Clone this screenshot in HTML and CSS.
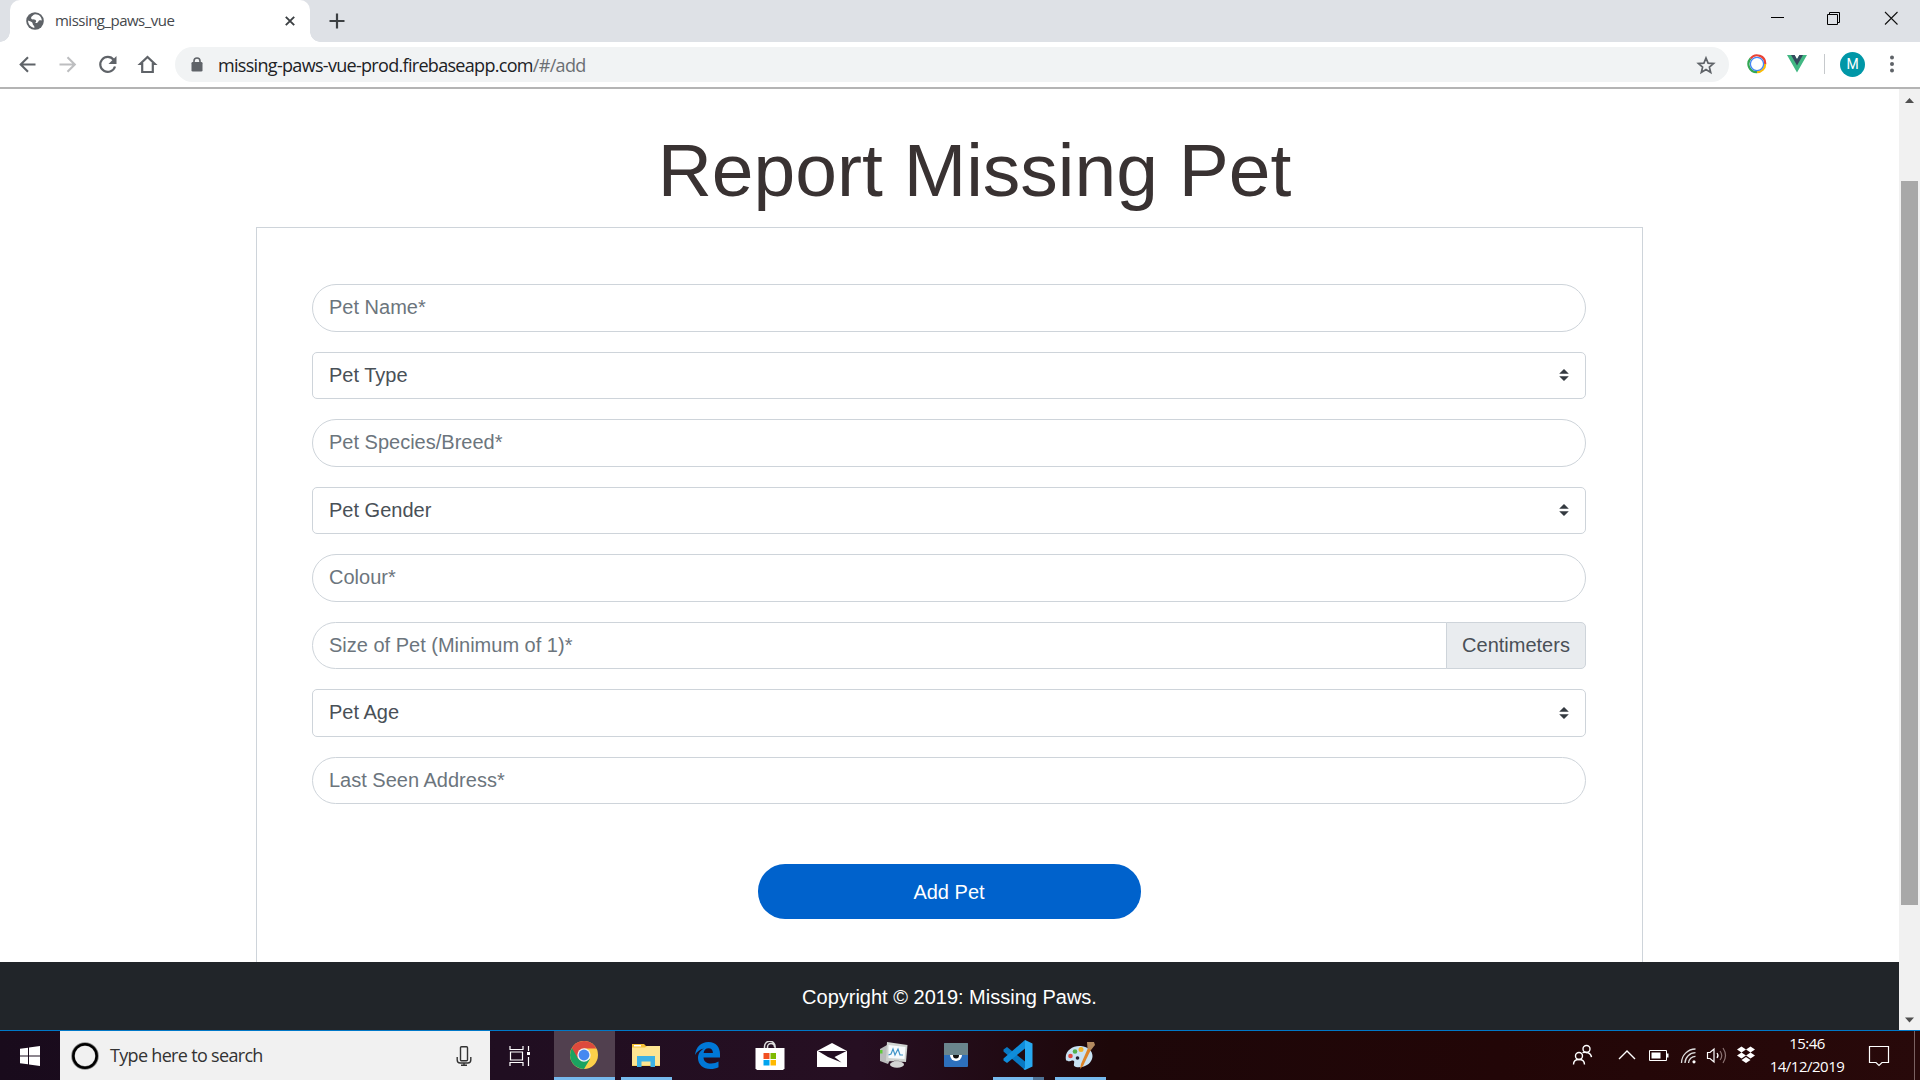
FILE: index.html
```html
<!DOCTYPE html>
<html lang="en">
<head>
<meta charset="utf-8">
<title>missing_paws_vue</title>
<link rel="stylesheet" href="styles.css">
</head>
<body>
<header class="tabstrip">
  <div class="tab">
    <svg class="globe" width="18" height="18" viewBox="0 0 18 18"><circle cx="9" cy="9" r="8.8" fill="#5f6368"/><path d="M9.500 2.200C7.500 2.300 7 3.500 6 4.200 4.800 5.200 4.800 6.500 6 7.300c1.200.7 3.200-.3 4 1.200.6 1.300-.5 1.700-.8 2.500 1.800.3 3-.7 3.400-2 .3-1.200 2-.9 3.200-.6C15.700 5 13 2.300 9.500 2.200zM2 8.500c.2 4 2.700 6.700 6.300 7.400.3-1.300-.2-2-.9-2.700-1-1-.4-1.900-1.400-2.900C4.900 9.300 3.500 9.200 2 8.500z" fill="#fff"/></svg>
    <span class="tab-title">missing_paws_vue</span>
    <svg class="tab-close" width="10" height="10" viewBox="0 0 10 10"><path d="M.8.8l8.400 8.400M9.200.8L.8 9.200" stroke="#3c4043" stroke-width="1.900"/></svg>
  </div>
  <svg class="new-tab" width="16" height="16" viewBox="0 0 16 16"><path d="M8 .5v15M.5 8h15" stroke="#3c4043" stroke-width="2.200"/></svg>
  <div class="window-buttons">
    <svg width="57" height="36" viewBox="0 0 57 36"><path d="M22 17.500h13" stroke="#000"/></svg>
    <svg width="57" height="36" viewBox="0 0 57 36"><path d="M21.500 14.500h10v10h-10zM23.500 14v-1.500h10v10H32" fill="none" stroke="#000"/></svg>
    <svg width="57" height="36" viewBox="0 0 57 36"><path d="M22 12l12.500 12.500M34.500 12L22 24.500" stroke="#111" stroke-width="1.100"/></svg>
  </div>
</header>
<nav class="toolbar">
  <svg class="nav-icon" width="40" height="36" viewBox="0 0 40 36"><path d="M28.500 18.500h-15M21 11.200l-7.300 7.300 7.300 7.300" fill="none" stroke="#5f6368" stroke-width="2.100"/></svg>
  <svg class="nav-icon" width="40" height="36" viewBox="0 0 40 36"><path d="M12.500 18.500h15M20.500 11.200l7.300 7.300-7.300 7.300" fill="none" stroke="#bdbec0" stroke-width="2.100"/></svg>
  <svg class="nav-icon" width="40" height="36" viewBox="0 0 40 36"><path d="M26.700 13.800A7.500 7.500 0 1 0 28 20.500" fill="none" stroke="#5f6368" stroke-width="2.200"/><path d="M29.500 10v8h-8z" fill="#5f6368"/></svg>
  <svg class="nav-icon" width="40" height="36" viewBox="0 0 40 36"><path d="M15.200 26v-8h-2l7.300-7 7.300 7h-2v8z" fill="none" stroke="#5f6368" stroke-width="2.200"/></svg>
  <div class="omnibox">
    <svg class="lock" width="12" height="15" viewBox="0 0 12 15"><rect x=".5" y="5" width="11" height="9.500" rx="1.300" fill="#5f6368"/><path d="M3 6V4a3 3 0 0 1 6 0v2" fill="none" stroke="#5f6368" stroke-width="1.600"/></svg>
    <span class="url">missing-paws-vue-prod.firebaseapp.com<span class="url-path">/#/add</span></span>
    <svg class="star" width="20" height="20" viewBox="0 0 20 20"><path d="M10 3l2.100 5.100 5.500.45-4.200 3.600 1.300 5.350L10 14.600l-4.700 2.900 1.300-5.350-4.200-3.600 5.500-.45z" fill="none" stroke="#5f6368" stroke-width="1.700"/></svg>
  </div>
  <svg class="ext" width="20" height="20" viewBox="0 0 20 20"><g fill="none" stroke-width="2.200"><path d="M3.500 4.600A8.200 8.200 0 0 1 18.200 10" stroke="#ea4335"/><path d="M18.200 10A8.200 8.200 0 0 1 10 18.200" stroke="#fbbc05"/><path d="M10 18.200A8.200 8.200 0 0 1 3.500 4.600" stroke="#34a853"/><circle cx="10" cy="10" r="6.600" stroke="#4285f4" stroke-width="1.300"/></g></svg>
  <svg class="ext" width="20" height="18" viewBox="0 0 20 18"><path d="M0 0h7.500L10 4.300 12.500 0H20L10 17.500z" fill="#41b883"/><path d="M4 0h3.600L10 4.200 12.400 0H16l-6 10.500z" fill="#35495e"/></svg>
  <span class="divider"></span>
  <span class="avatar">M</span>
  <svg class="dots" width="4" height="18" viewBox="0 0 4 18"><g fill="#5f6368"><circle cx="2" cy="2.500" r="2"/><circle cx="2" cy="9" r="2"/><circle cx="2" cy="15.500" r="2"/></g></svg>
</nav>
<div class="viewport">
  <div class="page">
    <main class="content">
      <h1 class="title">Report Missing Pet</h1>
      <form class="card">
        <input class="field" placeholder="Pet Name*">
        <div class="select"><span>Pet Type</span><svg width="10" height="12" viewBox="0 0 4 5"><path fill="#343a40" d="M2 0L0 2h4zm0 5L0 3h4z"/></svg></div>
        <input class="field" placeholder="Pet Species/Breed*">
        <div class="select"><span>Pet Gender</span><svg width="10" height="12" viewBox="0 0 4 5"><path fill="#343a40" d="M2 0L0 2h4zm0 5L0 3h4z"/></svg></div>
        <input class="field" placeholder="Colour*">
        <div class="group"><input class="field field-joined" placeholder="Size of Pet (Minimum of 1)*"><span class="unit">Centimeters</span></div>
        <div class="select"><span>Pet Age</span><svg width="10" height="12" viewBox="0 0 4 5"><path fill="#343a40" d="M2 0L0 2h4zm0 5L0 3h4z"/></svg></div>
        <input class="field" placeholder="Last Seen Address*">
        <button class="submit" type="button">Add Pet</button>
      </form>
    </main>
    <footer class="footer">Copyright © 2019: Missing Paws.</footer>
  </div>
  <div class="scrollbar">
    <svg width="21" height="21" viewBox="0 0 21 21"><path d="M6 14l4.500-5 4.500 5z" fill="#505050"/></svg>
    <div class="track"><div class="thumb"></div></div>
    <svg width="21" height="21" viewBox="0 0 21 21"><path d="M6 8.500l4.500 5 4.500-5z" fill="#505050"/></svg>
  </div>
</div>
<div class="taskbar">
  <div class="start"><svg width="20" height="20" viewBox="0 0 20 20"><path d="M0 2.800l8-1.100v7.800H0zM9 1.500L20 0v9.500H9zM0 10.500h8v7.800l-8-1.100zM9 10.500h11V20L9 18.500z" fill="#fff"/></svg></div>
  <div class="search">
    <svg width="28" height="28" viewBox="0 0 28 28"><circle cx="14" cy="14" r="12" fill="none" stroke="#888" stroke-width="3.600"/><circle cx="14" cy="14" r="11.700" fill="none" stroke="#000" stroke-width="2.500"/></svg>
    <span class="search-text">Type here to search</span>
    <svg class="mic" width="16" height="20" viewBox="0 0 16 20"><g fill="none" stroke="#333" stroke-width="1.400"><rect x="4.500" y=".8" width="7" height="14" rx="1"/><path d="M1.200 11v3c0 2 1 3 3 3h7.600c2 0 3-1 3-3v-3M8 17v2.500M5 19.300h6"/></g></svg>
  </div>
  <div class="taskview"><svg width="22" height="20" viewBox="0 0 22 20"><g fill="none" stroke="#fff" stroke-width="1.200"><path d="M1 0v3.500h13V0M1 20v-3.500h13V20M1.500 6h12v8h-12zM19.500 0v5M19.500 11v9"/></g><path d="M18 6h3v3h-3z" fill="#fff"/></svg></div>
  <div class="app app-active"><svg width="28" height="28" viewBox="0 0 28 28"><circle cx="14" cy="14" r="14" fill="#fdd04a"/><path d="M14 14L1.900 7A14 14 0 0 0 14 28l6-10z" fill="#1ba361"/><path d="M14 7.500h12.400A14 14 0 0 0 1.900 7L8 17.500z" fill="#dc4a3d"/><circle cx="14" cy="14" r="6.700" fill="#f3f3f3"/><circle cx="14" cy="14" r="5.400" fill="#4688f1"/></svg></div>
  <div class="app app-open"><svg width="28" height="24" viewBox="0 0 28 24"><path d="M0 1h12l2 2h14v20H0z" fill="#f5c136"/><path d="M0 4.500h13l2-1.500h13v19.500H0z" fill="#fee592"/><path d="M2 2h7v1.500H2z" fill="#fff"/><path d="M5 24V13h18v11h-4.500v-5.500h-9V24z" fill="#3db2e5"/></svg></div>
  <div class="app"><svg width="26" height="27" viewBox="0 0 26 27"><path d="M0 13C1 5 6 0 13.500 0 21 0 25 5.500 25 12v3.500H8.500c.2 4 3.500 6 7.500 6 3 0 5.500-.8 7.500-2v5.700c-2 1.200-5 1.800-8 1.800C8 27 3 22.500 3 16c0-4.500 2.400-7.500 6-9.500C5 7.300 2 9.500 0 13zm8.600-2h9.300c0-3-1.500-4.800-4.400-4.800-2.700 0-4.500 1.900-4.900 4.800z" fill="#0078d7"/></svg></div>
  <div class="app"><svg width="30" height="29" viewBox="0 0 30 29"><path d="M9.500 9V5.500a5.300 5.300 0 0 1 10.600 0V9M12.500 9V6a3.500 3.500 0 0 1 7 0" fill="none" stroke="#ddd" stroke-width="1.500"/><path d="M.5 7h29v20.500L28 29H2L.5 27.500z" fill="#fff"/><path d="M8.500 12h6v6h-6z" fill="#f25022"/><path d="M15.500 12h5.500v6h-5.500z" fill="#7fba00"/><path d="M8.500 19h6v5.500h-6z" fill="#00a4ef"/><path d="M15.500 19h5.500v5.500h-5.500z" fill="#ffb900"/></svg></div>
  <div class="app"><svg width="30" height="24" viewBox="0 0 30 24"><path d="M0 8L15 0l15 8v16H0z" fill="#fff"/><path d="M1 8h28.500l-12 6 7 5.500L11 14z" fill="#230e22"/></svg></div>
  <div class="app"><svg width="28" height="26" viewBox="0 0 28 26"><path d="M0 7l7-4 3 15-2 4-8-3z" fill="#b9bbbb"/><path d="M0 8h2.500v3.500H0z" fill="#5fc83b"/><path d="M7 0l20.500 3-1.500 17-20-1z" fill="#cfd3d0"/><path d="M8.500 3l17 2-1 12-16-1z" fill="#f7fbfd"/><path d="M8.500 13l2.500-1 2-5 2 6 3-6 2 6h3" fill="none" stroke="#3f94c8" stroke-width="1.200"/><path d="M14 18l5 .5V21h-5z" fill="#aaa"/><ellipse cx="17" cy="22.500" rx="7" ry="3.200" fill="#d3d5d4"/></svg></div>
  <div class="app"><svg width="24" height="24" viewBox="0 0 24 24"><rect width="24" height="24" rx="1" fill="#2d70bd"/><path d="M6 12h12a6 6 0 0 1-12 0z" fill="#fff"/><circle cx="12" cy="12.500" r="3" fill="#111"/><path d="M0 1a1 1 0 0 1 1-1h22a1 1 0 0 1 1 1v11H0z" fill="#6a858d"/></svg></div>
  <div class="app app-stack"><svg width="30" height="30" viewBox="0 0 30 30"><path d="M22 21.500L4 7 .5 9.500v2L22 30z" fill="#0879c4"/><path d="M22 8.500L4 23 .5 20.500v-2L22 0z" fill="#0f8ddb"/><path d="M22 0l7.500 3.500v23L22 30l-1.500-1 1.500-1z" fill="#28a9f1"/></svg></div>
  <div class="app app-open"><svg width="30" height="28" viewBox="0 0 30 28"><path d="M1 19C-1 10 8 4 16 5c9 1 13 7 11 13s-9 9-16 8c-4-1-1-4-2-6s-6 2-8-1z" fill="#c8e2f3"/><circle cx="5.500" cy="15" r="2.300" fill="#e24a3f"/><circle cx="10" cy="10.500" r="2.300" fill="#54b14c"/><circle cx="16" cy="8.500" r="2.500" fill="#f3b328"/><circle cx="12.500" cy="17" r="1.800" fill="#24202c"/><path d="M15 28l1-5 7-16 3 1.500L18 25z" fill="#dd8427"/><path d="M22 1l7 0 1 3-4 5-3.500-1.500z" fill="#b48a60"/></svg></div>
  <div class="tray">
    <svg width="40" height="30" viewBox="0 0 40 30"><g fill="none" stroke="#fff" stroke-width="1.400"><circle cx="24.500" cy="8" r="3.500"/><circle cx="17" cy="15" r="3.500"/><path d="M11.500 23.500c0-3 2-5 5.500-5s5.500 2 5.500 5M20.500 11.700c4-1.300 8.500.3 9 4.500"/></g></svg>
    <svg width="46" height="30" viewBox="0 0 46 30"><path d="M17 18l8-8 8 8" fill="none" stroke="#fff" stroke-width="1.400"/></svg>
    <svg width="22" height="30" viewBox="0 0 22 30"><path d="M1.500 9.500h17v10h-17z" fill="none" stroke="#fff"/><path d="M3.500 11.500h9v6h-9zM19 12.500h1.500v4H19z" fill="#fff"/></svg>
    <svg class="wifi" width="18" height="30" viewBox="0 0 18 30"><g fill="none" stroke="#ddd" stroke-width="1.300"><path d="M1.500 22A14 14 0 0 1 15.500 8M5 22A10.500 10.500 0 0 1 15.500 11.700M8.500 22a7 7 0 0 1 7-6.700"/></g><circle cx="14" cy="20.800" r="1.600" fill="#fff"/></svg>
    <svg class="sound" width="22" height="30" viewBox="0 0 22 30"><g fill="none" stroke="#fff" stroke-width="1.200"><path d="M1.500 11.500H4L8 8v13l-4-3.500H1.500zM11 12q2 2.500 0 5"/><path d="M14 10q3.500 4.500 0 9M17 7q5 7.500 0 15" stroke="#8d7474"/></g></svg>
    <svg class="dropbox" width="20" height="30" viewBox="0 0 20 30"><path d="M5.500 5.500l4.500 3-4.500 3-4.500-3zM14.500 5.500l4.500 3-4.500 3-4.500-3zM5.500 11.500l4.500 3-4.500 3-4.500-3zM14.500 11.500l4.500 3-4.500 3-4.500-3zM10 16l4.500 3L10 22l-4.500-3z" fill="#fff"/></svg>
    <div class="clock"><span>15:46</span><span>14/12/2019</span></div>
    <svg class="notes" width="22" height="30" viewBox="0 0 22 30"><path d="M1.500 5.500h19v16H14l-3 3-3-3H1.500z" fill="none" stroke="#fff" stroke-width="1.200"/></svg>
    <span class="peek"></span>
  </div>
</div>
</body>
</html>
```
FILE: styles.css
```css
* { box-sizing: border-box; }
body {
  margin: 0;
  width: 1920px;
  height: 1080px;
  overflow: hidden;
  display: flex;
  flex-direction: column;
  background: #fff;
  font-family: "Liberation Sans", Arial, sans-serif;
}
svg { display: block; flex: none; }

/* Browser chrome */
.tabstrip {
  height: 42px;
  flex: none;
  display: flex;
  background: #dee1e6;
  padding-left: 10px;
  font-family: "Open Sans", sans-serif;
}
.tab {
  position: relative;
  width: 300px;
  height: 42px;
  border-radius: 10px 10px 0 0;
  background: #fff;
  display: flex;
  align-items: center;
  padding: 0 15px 0 16px;
}
.tab::before, .tab::after {
  content: "";
  position: absolute;
  bottom: 0;
  width: 10px;
  height: 10px;
}
.tab::before { left: -10px; background: radial-gradient(circle at 0 0, #dee1e6 9.5px, #fff 10px); }
.tab::after { right: -10px; background: radial-gradient(circle at 100% 0, #dee1e6 9.5px, #fff 10px); }
.tab-title { margin-left: 11px; padding-bottom: 2px; font-size: 15px; letter-spacing: -0.52px; color: #45484c; white-space: nowrap; }
.tab-close { margin-left: auto; }
.new-tab { margin: 13px 0 0 19px; }
.window-buttons { margin-left: auto; display: flex; }
.toolbar {
  height: 47px;
  flex: none;
  display: flex;
  align-items: center;
  padding: 0 26px 2px 7px;
  border-bottom: 2px solid #b4b4b4;
  font-family: "Open Sans", sans-serif;
}
.omnibox {
  flex: 1;
  height: 35px;
  margin: 2px 0 0 8px;
  border-radius: 18px;
  background: #f1f3f4;
  display: flex;
  align-items: center;
  padding: 0 13px 0 16px;
}
.url { margin-left: 15px; font-size: 18px; letter-spacing: -0.69px; color: #202124; white-space: nowrap; }
.url-path { color: #6b6f73; }
.star { margin-left: auto; }
.ext { margin: 1px 0 0 18px; }
.ext + .ext { margin-left: 20px; }
.divider { width: 1px; height: 20px; background: #c6c9cc; margin: 1px 15px 0 17px; }
.avatar {
  width: 25px;
  height: 25px;
  border-radius: 50%;
  background: #0097a7;
  color: #fff;
  font: 14px/25px Roboto, sans-serif;
  text-align: center;
  margin: 2px 25px 0 0;
}
.dots { margin-top: 1px; }

/* Web page */
.viewport { flex: 1; min-height: 0; display: flex; }
.page { flex: 1; display: flex; flex-direction: column; }
.content { flex: 1; min-height: 0; overflow: hidden; padding: 33px 256px 0; }
.title {
  margin: 0;
  height: 105px;
  padding-left: 50px;
  font-size: 75px;
  line-height: 96px;
  font-weight: 400;
  text-align: center;
  color: #393232;
  white-space: nowrap;
}
.card {
  width: 1387px;
  height: 900px;
  border: 1px solid #ced4da;
  padding: 56px 56px 0 55px;
  display: flex;
  flex-direction: column;
  gap: 20px;
}
.field, .select {
  height: 47.5px;
  flex: none;
  width: 100%;
  border: 1px solid #ced4da;
  background: #fff;
  padding: 0 16px;
  font: 20px "Liberation Sans", Arial, sans-serif;
  color: #495057;
}
.field { border-radius: 24px; }
.field::placeholder { color: #6c757d; opacity: 1; }
.select {
  border-radius: 5px;
  display: flex;
  align-items: center;
  justify-content: space-between;
}
.group { display: flex; }
.field-joined { flex: 1; width: auto; border-radius: 24px 0 0 24px; }
.unit {
  width: 140px;
  margin-left: -1px;
  border: 1px solid #ced4da;
  border-radius: 0 5px 5px 0;
  background: #e9ecef;
  color: #495057;
  font-size: 20px;
  line-height: 44px;
  text-align: center;
}
.submit {
  align-self: center;
  width: 383px;
  height: 55px;
  flex: none;
  margin-top: 40px;
  padding: 2px 0 0;
  border: 0;
  border-radius: 27px;
  background: #0062cc;
  color: #fff;
  font: 20px "Liberation Sans", Arial, sans-serif;
}
.footer {
  height: 68px;
  flex: none;
  background: #212529;
  color: #fff;
  font-size: 20px;
  line-height: 71px;
  text-align: center;
}
.scrollbar { width: 21px; background: #f1f1f1; display: flex; flex-direction: column; }
.track { flex: 1; padding: 71px 2px 0; }
.thumb { height: 724px; background: #a8a8a8; }

/* Desktop taskbar */
.taskbar {
  height: 50px;
  flex: none;
  border-top: 1px solid #0078c8;
  background: linear-gradient(90deg, #190b1c 0, #200e21 500px, #260f22 860px, #1d0709 1110px, #220607 1500px, #28090a 1920px);
  display: flex;
  font-family: "Open Sans", sans-serif;
  color: #fff;
}
.start { width: 60px; display: flex; align-items: center; justify-content: center; }
.search {
  width: 430px;
  background: #f1f1f1;
  display: flex;
  align-items: center;
  padding: 0 18px 0 11px;
}
.search-text { margin-left: 11px; padding-bottom: 1px; font-size: 18px; letter-spacing: -0.68px; color: #333; white-space: nowrap; }
.mic { margin-left: auto; }
.taskview { width: 64px; display: flex; align-items: center; padding-left: 19px; }
.app {
  position: relative;
  width: 62px;
  display: flex;
  align-items: center;
  justify-content: center;
  padding: 0 2px 1px 0;
}
.app-active { background: #51404f; width: 61px; margin-right: 1px; border-bottom: 3px solid #76b9ed; padding: 2px 2px 0 0; }
.app-open::after, .app-stack::after {
  content: "";
  position: absolute;
  left: 5px;
  right: 6px;
  bottom: 0;
  height: 3px;
  background: #76b9ed;
}
.app-stack::after { background: linear-gradient(90deg, #76b9ed 40px, #4f7396 40px); }
.tray { margin-left: auto; display: flex; align-items: center; }
.wifi { margin-left: 10px; }
.sound { margin-left: 8px; }
.dropbox { margin-left: 8px; }
.clock {
  width: 90px;
  margin: 0 1px 2px 6px;
  display: flex;
  flex-direction: column;
  align-items: center;
  font-size: 15px;
  line-height: 23px;
  letter-spacing: -0.5px;
}
.notes { margin-left: 15px; }
.peek { width: 6px; height: 49px; border-left: 1px solid #7a6161; margin-left: 24px; }
```
